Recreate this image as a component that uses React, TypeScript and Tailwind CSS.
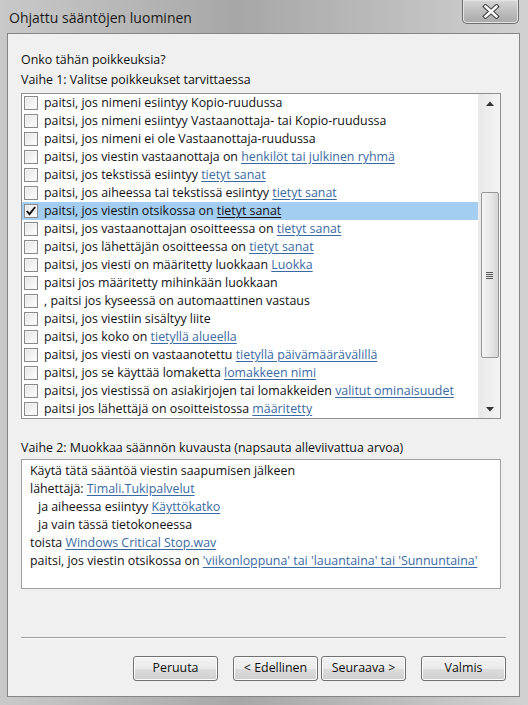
import React from 'react';

type Part = { t: string; link?: boolean };

const EXCEPTIONS: { parts: Part[]; checked?: boolean }[] = [
  { parts: [{ t: 'paitsi, jos nimeni esiintyy Kopio-ruudussa' }] },
  { parts: [{ t: 'paitsi, jos nimeni esiintyy Vastaanottaja- tai Kopio-ruudussa' }] },
  { parts: [{ t: 'paitsi, jos nimeni ei ole Vastaanottaja-ruudussa' }] },
  { parts: [{ t: 'paitsi, jos viestin vastaanottaja on ' }, { t: 'henkilöt tai julkinen ryhmä', link: true }] },
  { parts: [{ t: 'paitsi, jos tekstissä esiintyy ' }, { t: 'tietyt sanat', link: true }] },
  { parts: [{ t: 'paitsi, jos aiheessa tai tekstissä esiintyy ' }, { t: 'tietyt sanat', link: true }] },
  { parts: [{ t: 'paitsi, jos viestin otsikossa on ' }, { t: 'tietyt sanat', link: true }], checked: true },
  { parts: [{ t: 'paitsi, jos vastaanottajan osoitteessa on ' }, { t: 'tietyt sanat', link: true }] },
  { parts: [{ t: 'paitsi, jos lähettäjän osoitteessa on ' }, { t: 'tietyt sanat', link: true }] },
  { parts: [{ t: 'paitsi, jos viesti on määritetty luokkaan ' }, { t: 'Luokka', link: true }] },
  { parts: [{ t: 'paitsi jos määritetty mihinkään luokkaan' }] },
  { parts: [{ t: ', paitsi jos kyseessä on automaattinen vastaus' }] },
  { parts: [{ t: 'paitsi, jos viestiin sisältyy liite' }] },
  { parts: [{ t: 'paitsi, jos koko on ' }, { t: 'tietyllä alueella', link: true }] },
  { parts: [{ t: 'paitsi, jos viesti on vastaanotettu ' }, { t: 'tietyllä päivämäärävälillä', link: true }] },
  { parts: [{ t: 'paitsi, jos se käyttää lomaketta ' }, { t: 'lomakkeen nimi', link: true }] },
  { parts: [{ t: 'paitsi, jos viestissä on asiakirjojen tai lomakkeiden ' }, { t: 'valitut ominaisuudet', link: true }] },
  { parts: [{ t: 'paitsi jos lähettäjä on osoitteistossa ' }, { t: 'määritetty', link: true }] },
];

const DESCRIPTION: { parts: Part[]; indent?: boolean }[] = [
  { parts: [{ t: 'Käytä tätä sääntöä viestin saapumisen jälkeen' }] },
  { parts: [{ t: 'lähettäjä: ' }, { t: 'Timali.Tukipalvelut', link: true }] },
  { parts: [{ t: 'ja aiheessa esiintyy ' }, { t: 'Käyttökatko', link: true }], indent: true },
  { parts: [{ t: 'ja vain tässä tietokoneessa' }], indent: true },
  { parts: [{ t: 'toista ' }, { t: 'Windows Critical Stop.wav', link: true }] },
  {
    parts: [
      { t: 'paitsi, jos viestin otsikossa on ' },
      { t: "'viikonloppuna' tai 'lauantaina' tai 'Sunnuntaina'", link: true },
    ],
  },
];

const Checkbox = ({ checked }: { checked?: boolean }) => (
  <div className="relative w-[14px] h-[14px] shrink-0 border border-[#8a8a8a] bg-[linear-gradient(135deg,#e4e4e4,#ffffff)] shadow-[inset_0_0_0_1px_#f4f4f4]">
    {checked && (
      <svg className="absolute -left-[1px] -top-[1px]" width="14" height="14" viewBox="0 0 14 14">
        <path d="M2.8 7 L5.5 10.2 L11.2 3" fill="none" stroke="#111" strokeWidth="1.9" />
      </svg>
    )}
  </div>
);

const Text = ({ parts, selected }: { parts: Part[]; selected?: boolean }) => (
  <span className="whitespace-pre">
    {parts.map((p, i) =>
      p.link ? (
        <span
          key={i}
          className={`underline underline-offset-2 ${selected ? 'text-[#111]' : 'text-[#3a6aa3]'}`}
        >
          {p.t}
        </span>
      ) : (
        <span key={i}>{p.t}</span>
      )
    )}
  </span>
);

const Button = ({ label }: { label: string }) => (
  <button className="w-[85px] h-[25px] rounded-[3px] border border-[#707070] bg-[linear-gradient(#f2f2f2_0%,#ebebeb_50%,#dddddd_51%,#cfcfcf_100%)] text-[12.4px] text-[#111] shadow-[inset_0_0_0_1px_#fcfcfc]">
    {label}
  </button>
);

const Scrollbar = () => (
  <div className="w-[22px] shrink-0 flex flex-col items-center bg-[linear-gradient(to_right,#e8e8e8,#f4f4f4)] border-l border-[#ececec]">
    <div className="h-[18px] w-full flex items-center justify-center">
      <svg width="8" height="5" viewBox="0 0 8 5">
        <path d="M0 5 L4 0.5 L8 5 Z" fill="#333" />
      </svg>
    </div>
    <div className="h-[80px]" />
    <div className="w-[18px] h-[166px] rounded-[2px] border border-[#979797] bg-[linear-gradient(to_right,#f4f4f4,#e8e8e8_50%,#d6d6d6)] flex items-center justify-center">
      <div className="flex flex-col gap-[1px]">
        <div className="w-[7px] h-[1px] bg-[#555]" />
        <div className="w-[7px] h-[1px] bg-[#555]" />
        <div className="w-[7px] h-[1px] bg-[#555]" />
        <div className="w-[7px] h-[1px] bg-[#555]" />
      </div>
    </div>
    <div className="flex-1" />
    <div className="h-[18px] w-full flex items-center justify-center">
      <svg width="8" height="5" viewBox="0 0 8 5">
        <path d="M0 0 L8 0 L4 4.5 Z" fill="#333" />
      </svg>
    </div>
  </div>
);

export default function App() {
  return (
    <div
      className="w-[528px] h-[705px] flex flex-col overflow-hidden bg-[linear-gradient(to_right,#c9c9c9,#a7a7a7_45%,#bdbdbd_75%,#d2d2d2)] text-[12.4px] text-[#111]"
      style={{ fontFamily: '"Open Sans", "Noto Sans", sans-serif' }}
    >
      {/* title bar */}
      <div className="h-[33px] shrink-0 flex items-start relative">
        <div className="pl-[9px] pt-[7px] text-[14px] leading-[22px] text-[#1a1a1a]">Ohjattu sääntöjen luominen</div>
        <div className="absolute left-[462px] top-0 w-[57px] h-[24px] rounded-b-[5px] border border-t-0 border-[#6f6f6f] bg-[linear-gradient(#d8d8d8,#bdbdbd_50%,#a9a9a9)] shadow-[inset_0_0_0_1px_#e4e4e4] flex items-center justify-center">
          <svg width="18" height="15" viewBox="0 0 18 15">
            <path d="M3.5 2.5 L14.5 12.5 M14.5 2.5 L3.5 12.5" stroke="#4a4a4a" strokeWidth="4.6" strokeLinecap="square" />
            <path d="M3.5 2.5 L14.5 12.5 M14.5 2.5 L3.5 12.5" stroke="#ffffff" strokeWidth="2.4" strokeLinecap="square" />
          </svg>
        </div>
      </div>

      {/* client area */}
      <div className="ml-[7px] mr-[8px] h-[664px] shrink-0 border border-[#858585] bg-[#f0f0f0] px-[13px] pt-[16px] flex flex-col">
        <div className="leading-[20px]">Onko tähän poikkeuksia?</div>
        <div className="leading-[20px]">Vaihe 1: Valitse poikkeukset tarvittaessa</div>

        <div className="mt-[3px] w-[480px] h-[326px] border border-[#8e8f8f] bg-white flex">
          <div className="flex-1 flex flex-col">
            {EXCEPTIONS.map((row, i) => (
              <div
                key={i}
                className={`h-[18px] flex items-center pl-[2px] ${row.checked ? 'bg-[#a3cdf1]' : ''}`}
              >
                <Checkbox checked={row.checked} />
                <div className="pl-[6px] leading-[18px]">
                  <Text parts={row.parts} selected={row.checked} />
                </div>
              </div>
            ))}
          </div>
          <Scrollbar />
        </div>

        <div className="mt-[19px] leading-[20px]">Vaihe 2: Muokkaa säännön kuvausta (napsauta alleviivattua arvoa)</div>
        <div className="mt-[1px] w-[480px] h-[130px] border border-[#a0a0a0] bg-white pt-[2px] pl-[8px]">
          {DESCRIPTION.map((line, i) => (
            <div key={i} className={`h-[18px] leading-[18px] ${line.indent ? 'pl-[8px]' : ''}`}>
              <Text parts={line.parts} />
            </div>
          ))}
        </div>

        <div className="mt-[48px] w-[485px] border-t border-[#a0a0a0] border-b border-b-[#fbfbfb]" />

        <div className="mt-[17px] flex justify-end w-[485px]">
          <Button label="Peruuta" />
          <div className="ml-[15px] flex gap-[3px]">
            <Button label="< Edellinen" />
            <Button label="Seuraava >" />
          </div>
          <div className="ml-[15px]">
            <Button label="Valmis" />
          </div>
        </div>
      </div>
    </div>
  );
}
